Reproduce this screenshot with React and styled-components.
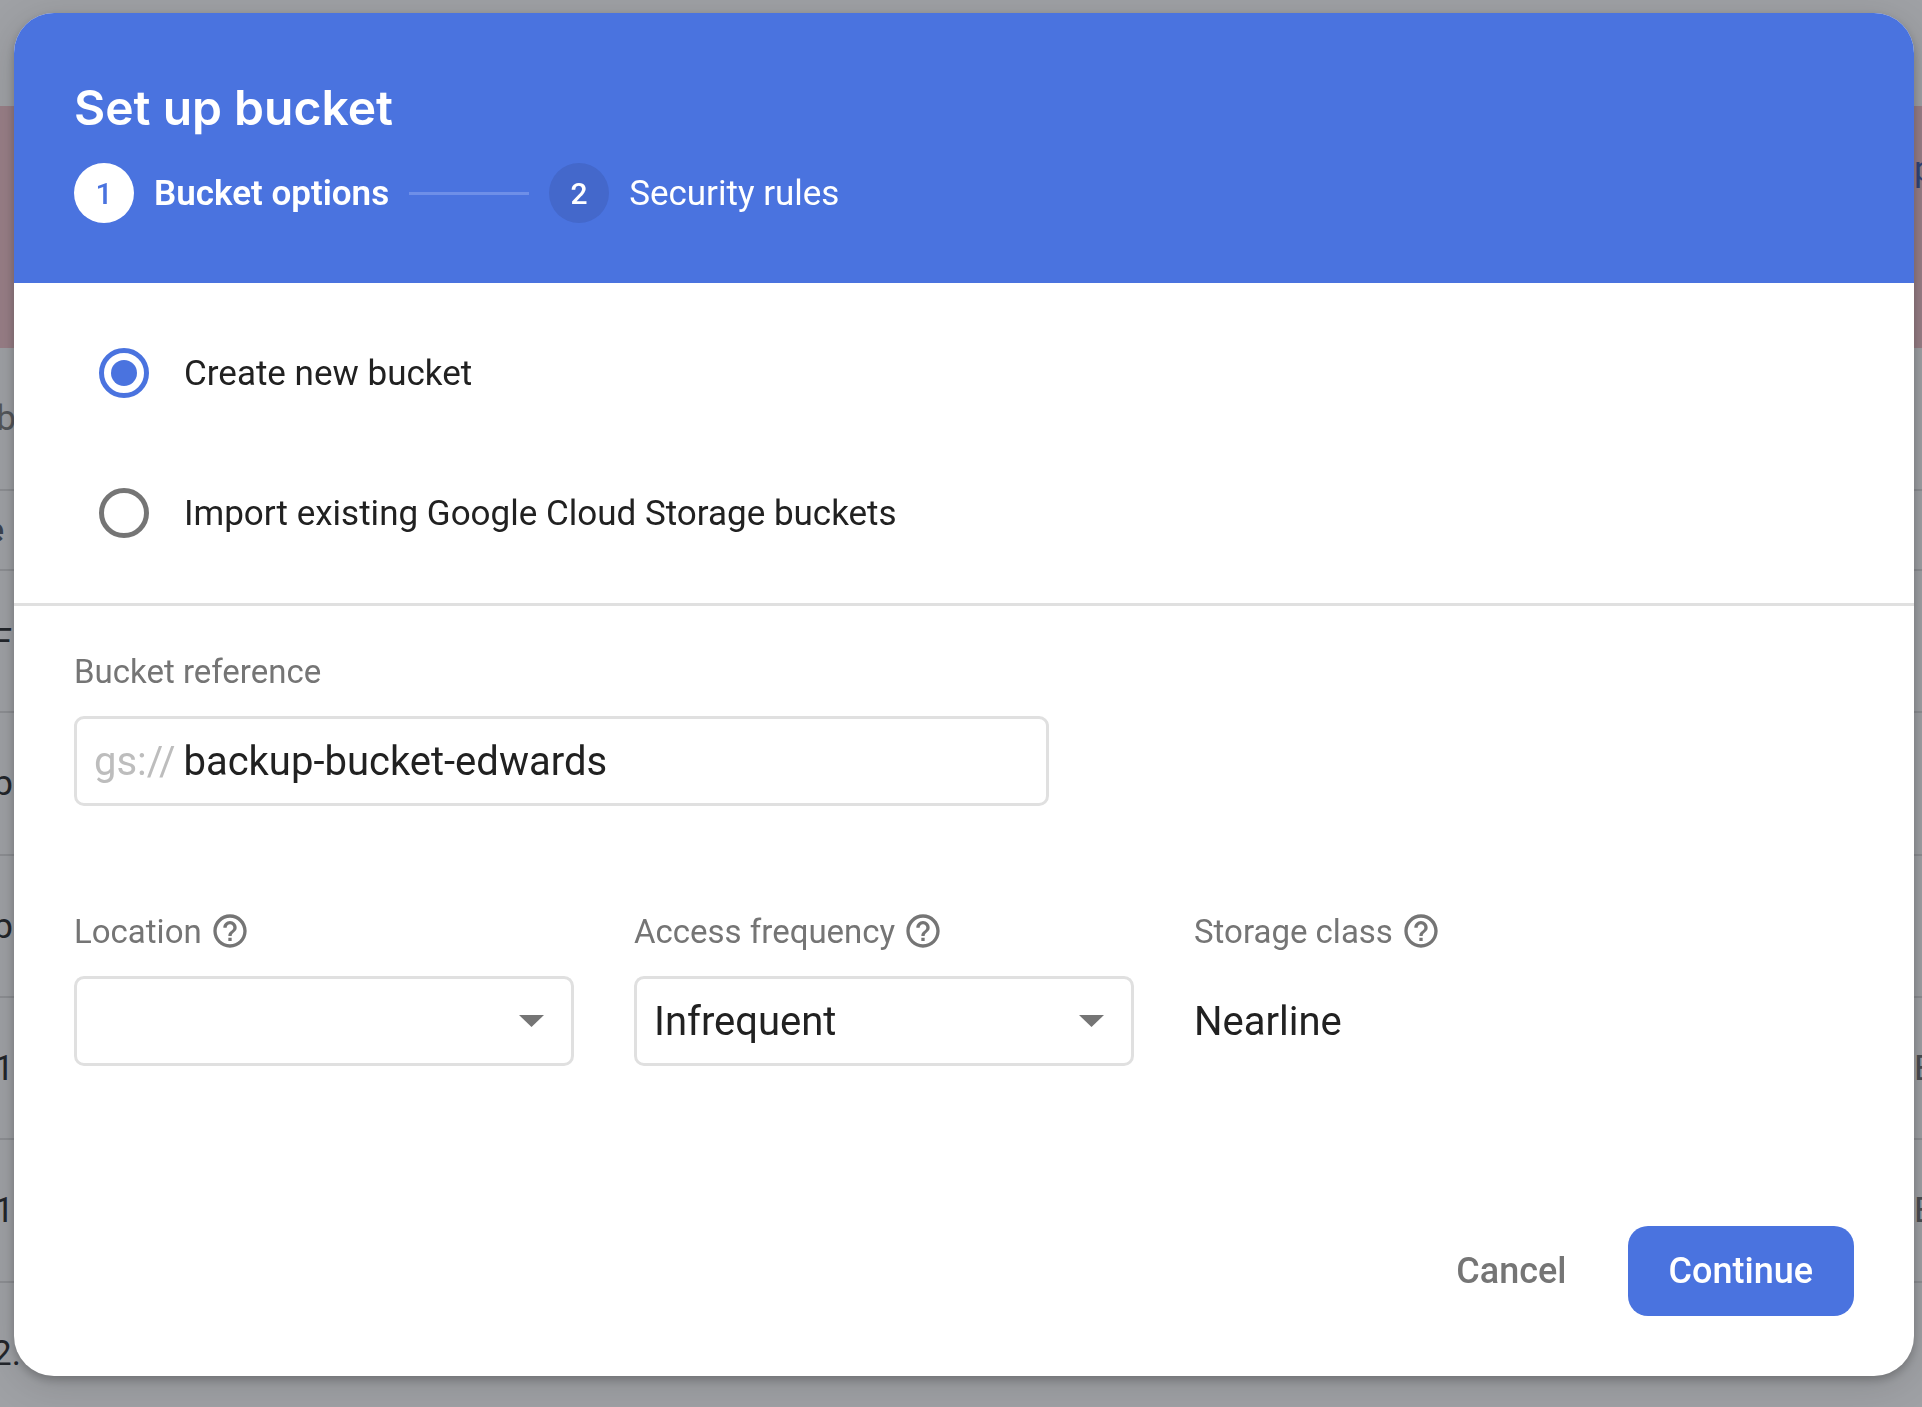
import React, { useState } from "react";
import styled, { createGlobalStyle } from "styled-components";

const GlobalStyle = createGlobalStyle`
  *, *::before, *::after { box-sizing: border-box; }
  body {
    margin: 0;
    font-family: Roboto, "Liberation Sans", sans-serif;
    font-size: 35px;
    line-height: 43px;
    color: #212121;
    background: #9fa1a5;
  }
  button, input, select { font: inherit; color: inherit; }
`;

const Page = styled.div`
  min-height: 100vh;
  display: flex;
  overflow: hidden;
`;

const Backdrop = styled.div`
  flex: 1;
  display: flex;
  flex-direction: column;
  height: 100vh;
  overflow: hidden;
`;

const TopBar = styled.div`
  flex: none;
  height: 106px;
`;

const Banner = styled.div`
  flex: none;
  display: flex;
  justify-content: flex-end;
  height: 242px;
  padding-top: 42px;
  background: #997f87;
`;

const Row = styled.div`
  flex: none;
  display: flex;
  justify-content: space-between;
  align-items: center;
  height: ${(p) => p.$height}px;
  border-bottom: 2px solid #8d8f93;
`;

const Leading = styled.span`
  display: flex;
  justify-content: flex-end;
  width: ${(p) => p.$width}px;
  font-weight: ${(p) => p.$weight || 400};
  color: ${(p) => p.$color || "#23262b"};
`;

const Trailing = styled.span`
  width: 8px;
  color: ${(p) => p.$color || "#4a4d52"};
`;

const Overlay = styled.div`
  position: fixed;
  inset: 0;
  display: flex;
  align-items: stretch;
  padding: 13px 8px 31px 14px;
`;

const Dialog = styled.form`
  flex: 1;
  display: flex;
  flex-direction: column;
  min-width: 0;
  overflow: hidden;
  border-radius: 40px;
  background: #fff;
  box-shadow: 0 4px 10px rgba(0, 0, 0, 0.22), 0 8px 40px rgba(0, 0, 0, 0.14);
`;

const Header = styled.header`
  display: flex;
  flex-direction: column;
  gap: 25px;
  padding: 65px 60px 60px;
  background: #4a73df;
  color: #fff;
`;

const Title = styled.h1`
  margin: 0;
  font-family: Inter, Roboto, sans-serif;
  font-size: 48px;
  line-height: 60px;
  font-weight: 600;
`;

const Steps = styled.ol`
  display: flex;
  align-items: center;
  gap: 20px;
  margin: 0;
  padding: 0;
  list-style: none;
`;

const Step = styled.li`
  display: flex;
  align-items: center;
  gap: 20px;
  font-weight: ${(p) => (p.$active ? 600 : 400)};
`;

const StepNumber = styled.span`
  display: grid;
  place-items: center;
  width: 60px;
  height: 60px;
  border-radius: 50%;
  font-size: 30px;
  font-weight: 500;
  background: ${(p) => (p.$active ? "#fff" : "#4468cb")};
  color: ${(p) => (p.$active ? "#4a73df" : "#fff")};
`;

const Connector = styled.li`
  width: 120px;
  height: 3px;
  background: #6e8fe8;
`;

const Choices = styled.fieldset`
  display: flex;
  flex-direction: column;
  margin: 0;
  padding: 20px 60px;
  border: 0;
  border-bottom: 3px solid #e0e0e0;
`;

const Choice = styled.label`
  display: flex;
  align-items: center;
  gap: 35px;
  height: 140px;
  padding: 0 25px;
  cursor: pointer;
`;

const Radio = styled.input`
  appearance: none;
  display: grid;
  place-items: center;
  width: 50px;
  height: 50px;
  margin: 0;
  border: 5px solid #757575;
  border-radius: 50%;

  &:checked { border-color: #4a73df; }
  &:checked::before {
    content: "";
    width: 26px;
    height: 26px;
    border-radius: 50%;
    background: #4a73df;
  }
`;

const Body = styled.section`
  flex: 1;
  display: flex;
  flex-direction: column;
  gap: 100px;
  padding: 40px 60px;
`;

const Fields = styled.div`
  display: grid;
  grid-template-columns: 500px 500px 1fr;
  gap: 60px;
`;

const Field = styled.div`
  display: flex;
  flex-direction: column;
  gap: 20px;
`;

const LabelRow = styled.div`
  display: flex;
  align-items: center;
  gap: 8px;
  height: 50px;
  font-size: 33px;
  color: #757575;
`;

const HelpButton = styled.button`
  display: flex;
  padding: 0;
  border: 0;
  background: none;
  color: #757575;
  cursor: pointer;
`;

const TextBox = styled.div`
  display: flex;
  align-items: center;
  gap: 8px;
  width: 975px;
  max-width: 100%;
  height: 90px;
  padding: 0 17px;
  border: 3px solid #e0e0e0;
  border-radius: 10px;
  font-size: 40px;
`;

const Prefix = styled.span`
  color: #bdbdbd;
`;

const TextInput = styled.input`
  flex: 1;
  min-width: 0;
  padding: 0;
  border: 0;
  outline: 0;
  background: none;
`;

const SelectBox = styled.div`
  display: grid;
  align-items: center;

  & > * { grid-area: 1 / 1; }
  & > svg {
    justify-self: end;
    margin-right: 30px;
    pointer-events: none;
  }
`;

const Select = styled.select`
  appearance: none;
  width: 100%;
  height: 90px;
  padding: 0 70px 0 17px;
  border: 3px solid #e0e0e0;
  border-radius: 10px;
  background: #fff;
  font-size: 40px;
`;

const Value = styled.output`
  display: flex;
  align-items: center;
  height: 90px;
  font-size: 40px;
`;

const Actions = styled.footer`
  display: flex;
  justify-content: flex-end;
  gap: 20px;
  padding: 0 60px 60px;
`;

const Button = styled.button`
  height: 90px;
  padding: 0 41px;
  border: 0;
  border-radius: 20px;
  font-size: 36px;
  font-weight: 500;
  cursor: pointer;
  background: ${(p) => (p.$primary ? "#4a73df" : "transparent")};
  color: ${(p) => (p.$primary ? "#fff" : "#757575")};
`;

const Help = ({ about }) => (
  <HelpButton type="button" aria-label={`Help: ${about}`}>
    <svg width="40" height="40" viewBox="0 0 24 24" fill="currentColor">
      <path d="M11 18h2v-2h-2v2zm1-16C6.48 2 2 6.48 2 12s4.480 10 10 10 10-4.480 10-10S17.520 2 12 2zm0 18c-4.410 0-8-3.590-8-8s3.590-8 8-8 8 3.590 8 8-3.590 8-8 8zm0-14c-2.210 0-4 1.790-4 4h2c0-1.100.9-2 2-2s2 .9 2 2c0 2-3 1.750-3 5h2c0-2.250 3-2.500 3-5 0-2.210-1.790-4-4-4z" />
    </svg>
  </HelpButton>
);

const Caret = () => (
  <svg width="25" height="12" viewBox="0 0 25 12" fill="#757575" aria-hidden="true">
    <path d="M0 0h25L12.500 12z" />
  </svg>
);

const ROWS = [
  { height: 143, start: "b", width: 16, color: "#54575b" },
  { height: 80, start: "e", width: 4, weight: 700, color: "#3c4350" },
  { height: 142, start: "F", width: 12 },
  { height: 143, start: "p", width: 13 },
  { height: 142, start: "p", width: 13 },
  { height: 142, start: "1", width: 14, end: "E" },
  { height: 143, start: "1", width: 14, end: "E" },
  { height: 142, start: "2.", width: 21 },
];

export default function App() {
  const [mode, setMode] = useState("create");
  const [name, setName] = useState("backup-bucket-edwards");
  const [location, setLocation] = useState("");
  const [frequency, setFrequency] = useState("Infrequent");

  return (
    <Page>
      <GlobalStyle />
      <Backdrop aria-hidden="true">
        <TopBar />
        <Banner>
          <Trailing $color="#2f4479">p</Trailing>
        </Banner>
        {ROWS.map((row, i) => (
          <Row key={i} $height={row.height}>
            <Leading $width={row.width} $weight={row.weight} $color={row.color}>
              {row.start}
            </Leading>
            <Trailing>{row.end}</Trailing>
          </Row>
        ))}
      </Backdrop>
      <Overlay>
        <Dialog role="dialog" aria-labelledby="title" onSubmit={(e) => e.preventDefault()}>
          <Header>
            <Title id="title">Set up bucket</Title>
            <Steps>
              <Step $active aria-current="step">
                <StepNumber $active>1</StepNumber>
                Bucket options
              </Step>
              <Connector aria-hidden="true" />
              <Step>
                <StepNumber>2</StepNumber>
                Security rules
              </Step>
            </Steps>
          </Header>
          <Choices aria-label="Bucket source">
            <Choice>
              <Radio type="radio" name="mode" checked={mode === "create"} onChange={() => setMode("create")} />
              Create new bucket
            </Choice>
            <Choice>
              <Radio type="radio" name="mode" checked={mode === "import"} onChange={() => setMode("import")} />
              Import existing Google Cloud Storage buckets
            </Choice>
          </Choices>
          <Body>
            <Field>
              <LabelRow>
                <label htmlFor="reference">Bucket reference</label>
              </LabelRow>
              <TextBox>
                <Prefix>gs://</Prefix>
                <TextInput id="reference" type="text" value={name} onChange={(e) => setName(e.target.value)} />
              </TextBox>
            </Field>
            <Fields>
              <Field>
                <LabelRow>
                  <label htmlFor="location">Location</label>
                  <Help about="location" />
                </LabelRow>
                <SelectBox>
                  <Select id="location" value={location} onChange={(e) => setLocation(e.target.value)}>
                    <option value=""></option>
                  </Select>
                  <Caret />
                </SelectBox>
              </Field>
              <Field>
                <LabelRow>
                  <label htmlFor="frequency">Access frequency</label>
                  <Help about="access frequency" />
                </LabelRow>
                <SelectBox>
                  <Select id="frequency" value={frequency} onChange={(e) => setFrequency(e.target.value)}>
                    <option>Infrequent</option>
                  </Select>
                  <Caret />
                </SelectBox>
              </Field>
              <Field>
                <LabelRow>
                  <label htmlFor="storage">Storage class</label>
                  <Help about="storage class" />
                </LabelRow>
                <Value id="storage">Nearline</Value>
              </Field>
            </Fields>
          </Body>
          <Actions>
            <Button type="button">Cancel</Button>
            <Button type="submit" $primary>Continue</Button>
          </Actions>
        </Dialog>
      </Overlay>
    </Page>
  );
}
